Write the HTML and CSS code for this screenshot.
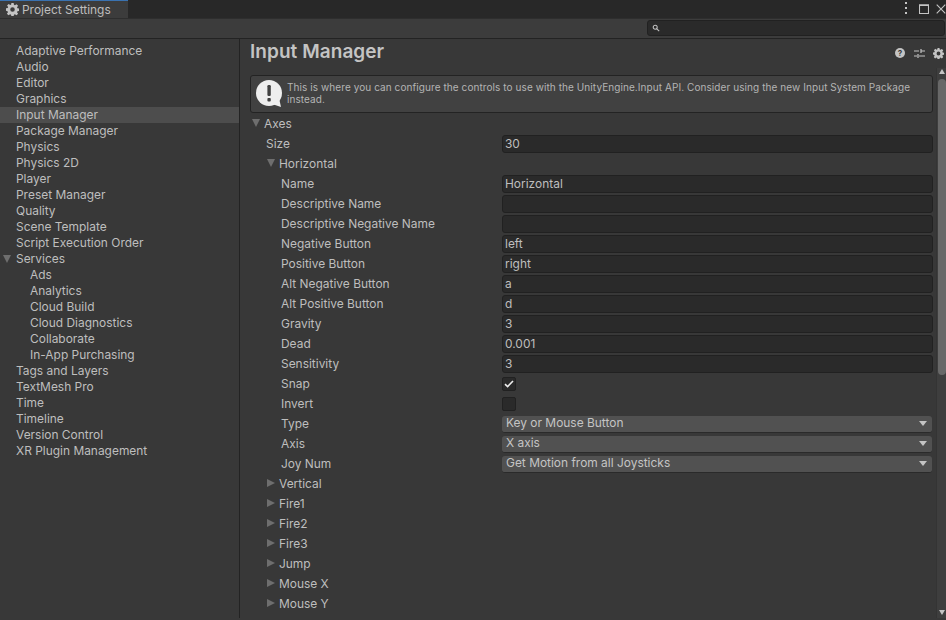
FILE: index.html
```html
<!DOCTYPE html>
<html lang="en">
<head>
<meta charset="utf-8">
<title>Project Settings</title>
<link rel="stylesheet" href="styles.css">
</head>
<body>
<div class="window">
  <header class="titlebar">
    <div class="tab">
      <svg class="tab-gear" viewBox="0 0 16 16"><use href="#gear"/></svg>
      <span>Project Settings</span>
    </div>
    <div class="win-controls">
      <svg class="ctl-kebab" viewBox="0 0 4 12"><rect x="1" y="0" width="2" height="2"/><rect x="1" y="5" width="2" height="2"/><rect x="1" y="10" width="2" height="2"/></svg>
      <svg class="ctl-max" viewBox="0 0 10 10"><path d="M.5 1h9v8.500h-9z" class="line"/><path d="M0 .5h10v1.500h-10z" class="solid"/></svg>
      <svg class="ctl-close" viewBox="0 0 10 10"><path d="M.7.7l8.6 8.6M9.3.7L.7 9.3" class="line"/></svg>
    </div>
  </header>
  <div class="toolbar">
    <div class="search">
      <svg class="search-icon" viewBox="0 0 10 10"><circle cx="4" cy="4" r="2.500"/><path d="M6 6l3 3"/></svg>
    </div>
  </div>
  <div class="body">
    <nav class="sidebar">
      <div class="nav-item">Adaptive Performance</div>
      <div class="nav-item">Audio</div>
      <div class="nav-item">Editor</div>
      <div class="nav-item">Graphics</div>
      <div class="nav-item selected">Input Manager</div>
      <div class="nav-item">Package Manager</div>
      <div class="nav-item">Physics</div>
      <div class="nav-item">Physics 2D</div>
      <div class="nav-item">Player</div>
      <div class="nav-item">Preset Manager</div>
      <div class="nav-item">Quality</div>
      <div class="nav-item">Scene Template</div>
      <div class="nav-item">Script Execution Order</div>
      <div class="nav-item parent"><i class="arrow-down nav-arrow"></i>Services</div>
      <div class="nav-item child">Ads</div>
      <div class="nav-item child">Analytics</div>
      <div class="nav-item child">Cloud Build</div>
      <div class="nav-item child">Cloud Diagnostics</div>
      <div class="nav-item child">Collaborate</div>
      <div class="nav-item child">In-App Purchasing</div>
      <div class="nav-item">Tags and Layers</div>
      <div class="nav-item">TextMesh Pro</div>
      <div class="nav-item">Time</div>
      <div class="nav-item">Timeline</div>
      <div class="nav-item">Version Control</div>
      <div class="nav-item">XR Plugin Management</div>
    </nav>
    <main class="main">
      <div class="heading-row">
        <h1>Input Manager</h1>
        <div class="heading-icons">
          <svg class="icon-help" viewBox="0 0 10 10"><circle cx="5" cy="5" r="5"/><text x="5" y="8" class="help-q">?</text></svg>
          <svg class="icon-sliders" viewBox="0 0 11 11"><path d="M0 3h5M7 3h4M7 1v4M0 8h3M5 8h6M4 6v4"/></svg>
          <svg class="icon-gear" viewBox="0 0 16 16"><use href="#gear"/></svg>
        </div>
      </div>
      <div class="scrollpane">
        <div class="content">
          <div class="helpbox">
            <svg class="help-bubble" viewBox="0 0 27 28"><circle cx="13" cy="13" r="13"/><path d="M16 24l9 3-2-9z"/><rect x="11.400" y="5" width="3.400" height="11" rx="1.200" class="mark"/><rect x="11.400" y="18" width="3.400" height="3.400" rx="1" class="mark"/></svg>
            <p>This is where you can configure the controls to use with the UnityEngine.Input API. Consider using the new Input System Package instead.</p>
          </div>
          <div class="row"><i class="arrow-down a0"></i><span>Axes</span></div>
          <div class="row l1"><label>Size</label><div class="field">30</div></div>
          <div class="row f1"><i class="arrow-down a1"></i><span>Horizontal</span></div>
          <div class="row l2"><label>Name</label><div class="field">Horizontal</div></div>
          <div class="row l2"><label>Descriptive Name</label><div class="field"></div></div>
          <div class="row l2"><label>Descriptive Negative Name</label><div class="field"></div></div>
          <div class="row l2"><label>Negative Button</label><div class="field">left</div></div>
          <div class="row l2"><label>Positive Button</label><div class="field">right</div></div>
          <div class="row l2"><label>Alt Negative Button</label><div class="field">a</div></div>
          <div class="row l2"><label>Alt Positive Button</label><div class="field">d</div></div>
          <div class="row l2"><label>Gravity</label><div class="field">3</div></div>
          <div class="row l2"><label>Dead</label><div class="field">0.001</div></div>
          <div class="row l2"><label>Sensitivity</label><div class="field">3</div></div>
          <div class="row l2"><label>Snap</label><div class="check"><svg viewBox="0 0 10 8"><path d="M1 4.200l2.600 2.400L9 1"/></svg></div></div>
          <div class="row l2"><label>Invert</label><div class="check"></div></div>
          <div class="row l2"><label>Type</label><div class="dropdown">Key or Mouse Button<i class="dd-arrow"></i></div></div>
          <div class="row l2"><label>Axis</label><div class="dropdown">X axis<i class="dd-arrow"></i></div></div>
          <div class="row l2"><label>Joy Num</label><div class="dropdown">Get Motion from all Joysticks<i class="dd-arrow"></i></div></div>
          <div class="row f1"><i class="arrow-right"></i><span>Vertical</span></div>
          <div class="row f1"><i class="arrow-right"></i><span>Fire1</span></div>
          <div class="row f1"><i class="arrow-right"></i><span>Fire2</span></div>
          <div class="row f1"><i class="arrow-right"></i><span>Fire3</span></div>
          <div class="row f1"><i class="arrow-right"></i><span>Jump</span></div>
          <div class="row f1"><i class="arrow-right"></i><span>Mouse X</span></div>
          <div class="row f1"><i class="arrow-right"></i><span>Mouse Y</span></div>
        </div>
        <div class="scrollbar">
          <i class="sb-up"></i>
          <div class="sb-track"><div class="sb-thumb"></div></div>
          <i class="sb-down"></i>
        </div>
      </div>
    </main>
  </div>
</div>
<svg class="defs" width="0" height="0">
  <defs>
    <path id="gear" fill-rule="evenodd" d="M6.600 0h2.800l.4 2.200 1.200.5 1.900-1.300 2 2-1.300 1.900.5 1.200 2.200.4v2.800l-2.200.4-.5 1.200 1.300 1.900-2 2-1.900-1.300-1.200.5-.4 2.200H6.600l-.4-2.200-1.200-.5-1.900 1.300-2-2 1.300-1.900-.5-1.200L-.1 9.400V6.600l2.200-.4.5-1.200-1.300-1.900 2-2 1.900 1.300 1.200-.5zM8 5.200a2.800 2.800 0 1 0 0 5.600 2.800 2.800 0 0 0 0-5.600z"/>
  </defs>
</svg>
</body>
</html>
```
FILE: styles.css
```css
* { box-sizing: border-box; }
html, body { margin: 0; padding: 0; height: 100%; overflow: hidden; }
body { background: #383838; color: #bebebe; font-family: Inter, "Liberation Sans", sans-serif; font-size: 11.95px; }
.defs { position: absolute; }
.window { display: flex; flex-direction: column; height: 620px; width: 946px; }

.titlebar { height: 18px; background: #282828; display: flex; justify-content: space-between; flex: none; }
.tab { width: 128px; background: #3c3c3c; border-top: 1px solid #3a72b0; display: flex; align-items: center; padding-left: 6px; gap: 3px; color: #bebebe; }
.tab-gear { width: 13px; height: 13px; fill: #c4c4c4; }
.win-controls { display: flex; align-items: center; }
.ctl-kebab { width: 4px; height: 12px; fill: #c4c4c4; margin-right: 11px; margin-bottom: 2px; }
.ctl-max { width: 10px; height: 10px; margin-right: 7px; margin-bottom: 1px; }
.ctl-close { width: 10px; height: 10px; margin-bottom: 1px; }
.line { fill: none; stroke: #c4c4c4; stroke-width: 1.1; }
.solid { fill: #c4c4c4; }

.toolbar { height: 21px; background: #3c3c3c; border-bottom: 1px solid #232323; border-top: 1px solid #2e2e2e; flex: none; display: flex; justify-content: flex-end; padding-top: 1px; }
.search { width: 298px; height: 16px; background: #2a2a2a; border: 1px solid #212121; border-radius: 3px; margin-right: 1px; display: flex; align-items: center; padding-left: 4px; }
.search-icon { width: 8px; height: 8px; fill: none; stroke: #c4c4c4; stroke-width: 1.3; }

.body { display: flex; flex: 1; min-height: 0; }
.sidebar { width: 240px; flex: none; border-right: 1px solid #232323; padding-top: 4px; margin-bottom: 2px; }
.nav-item { height: 16px; line-height: 16px; padding-left: 16px; position: relative; }
.nav-item.selected { background: #4d4d4d; }
.nav-item.child { padding-left: 30px; }
.nav-arrow { position: absolute; left: 3px; top: 4px; }

.arrow-down { display: block; width: 0; height: 0; border-left: 4.5px solid transparent; border-right: 4.5px solid transparent; border-top: 8px solid #6e6e6e; flex: none; }
.arrow-right { display: block; width: 0; height: 0; border-top: 4.5px solid transparent; border-bottom: 4.5px solid transparent; border-left: 8px solid #6e6e6e; flex: none; margin-right: 4px; }

.main { flex: 1; min-width: 0; display: flex; flex-direction: column; }
.heading-row { height: 29px; display: flex; justify-content: space-between; align-items: center; padding: 0 0 4px 10px; flex: none; }
h1 { margin: 0; font-size: 19px; font-weight: 600; color: #c4c4c4; line-height: 24px; letter-spacing: .05px; }
.heading-icons { display: flex; align-items: center; gap: 9px; padding-right: 2px; padding-top: 3px; }
.icon-help { width: 10px; height: 10px; fill: #c4c4c4; }
.help-q { fill: #383838; font-size: 8px; font-weight: 700; text-anchor: middle; font-family: Inter, sans-serif; }
.icon-sliders { width: 11px; height: 11px; fill: none; stroke: #c4c4c4; stroke-width: 1.2; margin-right: -1px; }
.icon-gear { width: 11px; height: 11px; fill: #c4c4c4; }

.scrollpane { flex: 1; display: flex; min-height: 0; }
.content { flex: 1; min-width: 0; padding: 7px 3px 0 10px; }
.helpbox { height: 38px; background: #414141; border: 1px solid #232323; border-radius: 3px; display: flex; align-items: center; padding: 0 14px 0 5px; margin-bottom: 1px; }
.help-bubble { width: 27px; height: 28px; flex: none; fill: #eee; margin-right: 4px; }
.help-bubble .mark { fill: #414141; }
.helpbox p { margin: 0 0 2px; font-size: 10px; line-height: 12px; color: #b4b4b4; letter-spacing: .08px; }

.row { height: 20px; display: flex; align-items: center; }
.row label, .row span, .row > i { margin-bottom: 2px; }
.row label { flex: none; }
.l1 label { width: 236px; margin-left: 16px; }
.l2 label { width: 221px; margin-left: 31px; }
.row .a0 { margin-left: 2px; margin-right: 4px; }
.f1 { padding-left: 17px; }
.row .a1 { margin-right: 4px; }
.field { flex: 1; height: 18px; line-height: 16px; background: #2a2a2a; border: 1px solid #212121; border-radius: 3px; padding-left: 2px; }
.check { width: 14px; height: 14px; background: #2a2a2a; border: 1px solid #212121; border-radius: 2px; display: flex; align-items: center; justify-content: center; }
.check svg { width: 10px; height: 8px; fill: none; stroke: #eee; stroke-width: 1.6; }
.dropdown { flex: 1; height: 17px; line-height: 14px; background: #515151; border-bottom: 1px solid #2a2a2a; border-radius: 3px; padding-left: 4px; margin-right: 1px; position: relative; color: #c4c4c4; }
.dd-arrow { position: absolute; right: 5px; top: 5px; width: 0; height: 0; border-left: 4px solid transparent; border-right: 4px solid transparent; border-top: 5px solid #c4c4c4; }

.scrollbar { width: 10px; flex: none; background: #3e3e3e; border-left: 1px solid #343434; padding-left: 1px; display: flex; flex-direction: column; margin-bottom: 2px; }
.sb-up { flex: none; margin: 1px 0 0 1px; width: 0; height: 0; border-left: 3.5px solid transparent; border-right: 3.5px solid transparent; border-bottom: 5px solid #c4c4c4; }
.sb-down { flex: none; margin: 0 0 3px 1px; width: 0; height: 0; border-left: 3.5px solid transparent; border-right: 3.5px solid transparent; border-top: 5px solid #c4c4c4; }
.sb-track { flex: 1; width: 100%; padding-top: 5px; }
.sb-thumb { width: 100%; height: 296px; background: #686868; border-radius: 4px; }
```
